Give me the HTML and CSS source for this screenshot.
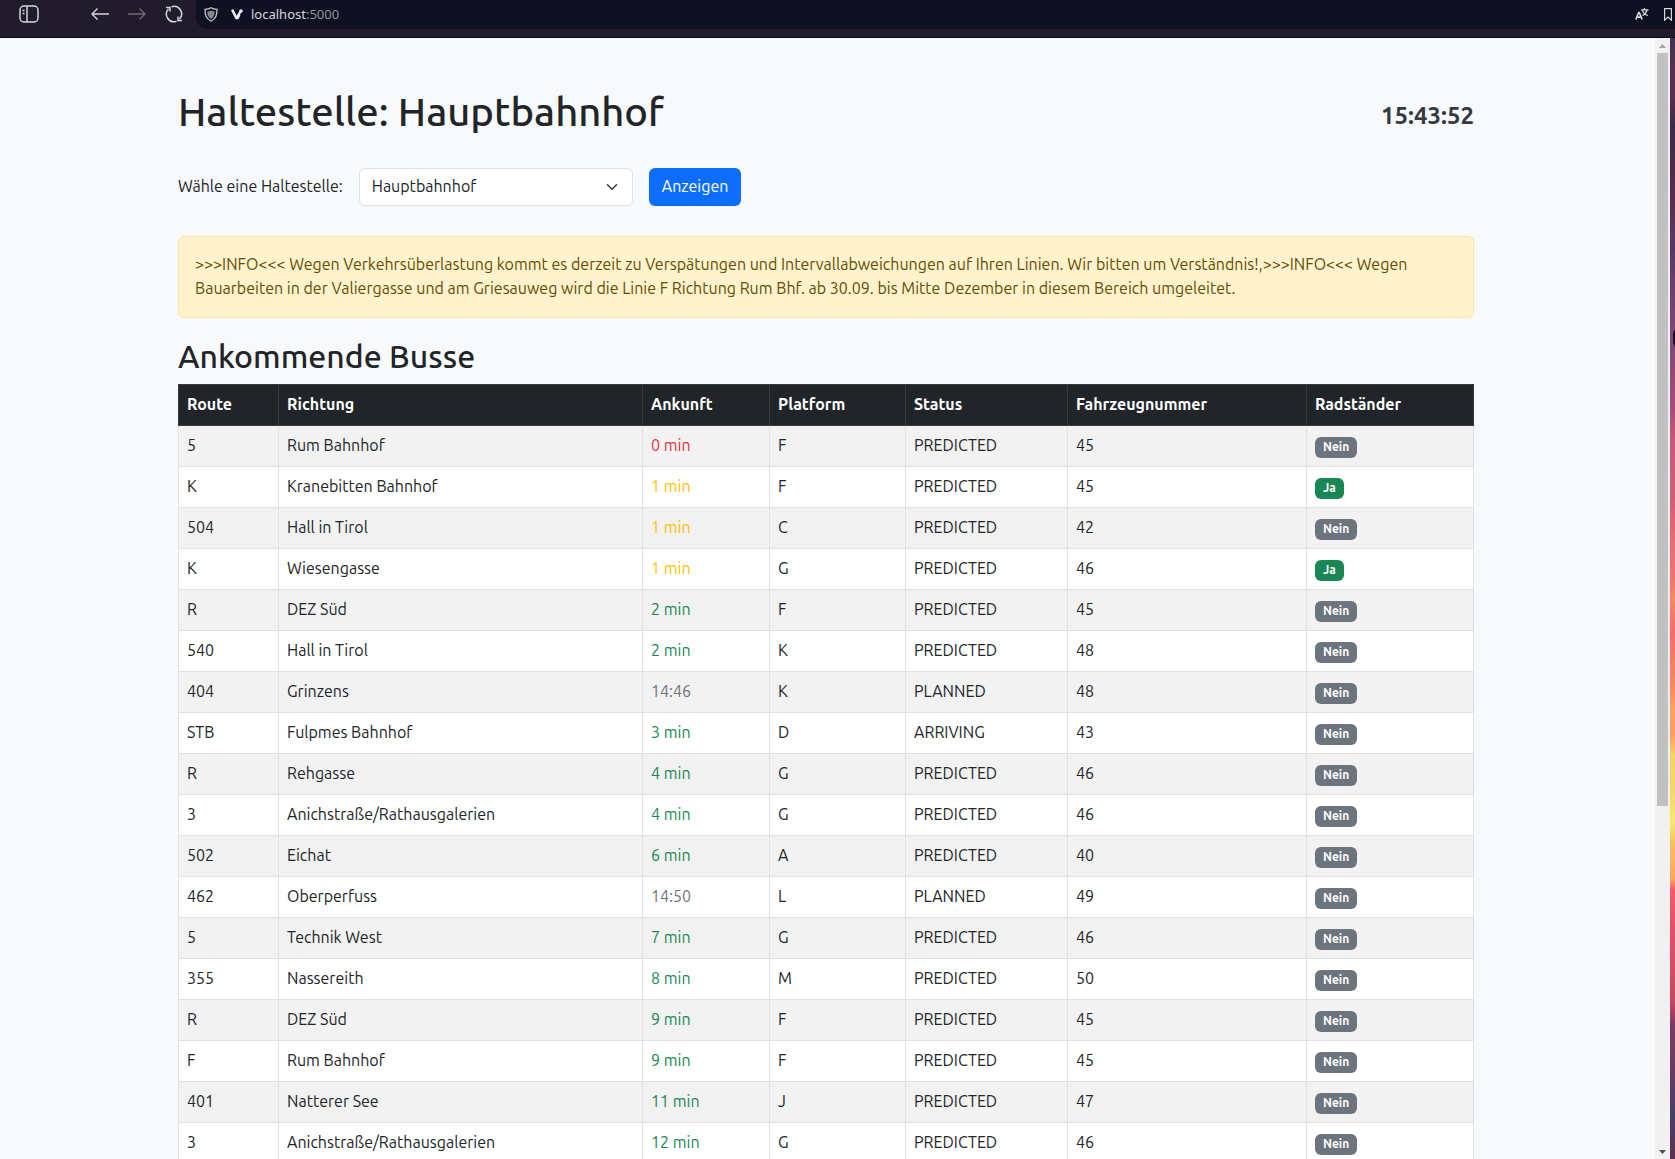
FILE: index.html
```html
<!DOCTYPE html>
<html lang="de">
<head>
<meta charset="utf-8">
<meta name="viewport" content="width=device-width, initial-scale=1">
<title>Haltestelle: Hauptbahnhof</title>
<link rel="stylesheet" href="styles.css">
</head>
<body>
<header class="browser-bar">
  <nav class="browser-nav" aria-label="Browser">
    <button class="icon-button panel-button" type="button" aria-label="Seitenleiste">
      <svg width="20" height="18" viewBox="0 0 20 18" fill="none" stroke="currentColor" stroke-width="1.5"><rect x="1" y="1" width="18" height="16" rx="4"/><path d="M8 1v16"/><path d="M3.5 5.5h2M3.5 8.5h2" stroke-width="1.3"/></svg>
    </button>
    <button class="icon-button" type="button" aria-label="Zurück">
      <svg width="18" height="12" viewBox="0 0 18 12" fill="none" stroke="currentColor" stroke-width="1.4"><path d="M1 6h17M6.5.5 1 6l5.500 5.500"/></svg>
    </button>
    <button class="icon-button" type="button" aria-label="Vorwärts" disabled>
      <svg width="18" height="12" viewBox="0 0 18 12" fill="none" stroke="currentColor" stroke-width="1.4"><path d="M17 6H0M11.500.5 17 6l-5.500 5.500"/></svg>
    </button>
    <button class="icon-button" type="button" aria-label="Neu laden">
      <svg width="18" height="18" viewBox="0 0 18 18" fill="none" stroke="currentColor" stroke-width="1.5"><path d="M6.500 1.800A7.500 7.500 0 0 1 14.500 14M11.500 16.200A7.500 7.500 0 0 1 3.500 4"/><path d="M1 2.500h4v4M17 15.500h-4v-4"/></svg>
    </button>
  </nav>
  <div class="address">
    <svg width="14" height="15" viewBox="0 0 14 15" fill="none" stroke="currentColor" stroke-width="1.300"><path d="M7 .8c2 1.200 4 1.500 6 1.500 0 5.500-.8 9.200-6 12-5.200-2.800-6-6.500-6-12 2 0 4-.3 6-1.500z"/><path d="M7 3.500c1.300.7 2.500 1 3.700 1.100-.1 3.500-.8 5.600-3.700 7.400-2.900-1.800-3.600-3.900-3.700-7.400C4.500 4.500 5.700 4.200 7 3.500z" fill="#85868f" stroke="none"/></svg>
    <svg class="site-icon" width="12" height="11" viewBox="0 0 12 11" fill="none" stroke="currentColor" stroke-linecap="round" stroke-linejoin="round" stroke-width="2.600"><path d="M1.600 1.600 5.400 9l1.200 0 1.400-2.800"/><path d="M5.400 9 9.600 2.300" stroke-width="2.200"/><circle cx="10" cy="1.900" r="1" stroke-width="1.500"/></svg>
    <a class="url" href="#">localhost<span class="port">:5000</span></a>
    <div class="address-tools">
      <button class="icon-button" type="button" aria-label="Übersetzen">
        <svg width="14" height="12" viewBox="0 0 14 12" fill="none" stroke="currentColor"><path d="M.8 11.500 3.700 4.500h.6l2.900 7M2 9.200h4" stroke-width="1.700"/><path d="M6 1.800h7.500M9.500 0v1.800M12 2c-.6 2.500-2 4.500-4.500 5.500M7.500 2.500c.8 2.300 2.500 4.200 5.500 5" stroke-width="1.200"/></svg>
      </button>
      <button class="icon-button" type="button" aria-label="Lesezeichen">
        <svg width="8" height="13" viewBox="0 0 8 13" fill="none" stroke="currentColor" stroke-width="1.200"><path d="M.6.6h6.800v11.600L4 9 .6 12.200z"/></svg>
      </button>
    </div>
  </div>
</header>
<div class="window">
  <main class="page">
    <div class="title-row">
      <h1>Haltestelle: Hauptbahnhof</h1>
      <time class="clock">15:43:52</time>
    </div>
    <form class="stop-form">
      <label for="stop">Wähle eine Haltestelle:</label>
      <div class="select-wrap">
        <select id="stop"><option>Hauptbahnhof</option></select>
        <svg class="chevron" width="12" height="12" viewBox="0 0 16 16" fill="none" stroke="#343a40" stroke-width="2" stroke-linecap="round" stroke-linejoin="round"><path d="m2 5 6 6 6-6"/></svg>
      </div>
      <button class="submit" type="submit">Anzeigen</button>
    </form>
    <div class="alert" role="alert">&gt;&gt;&gt;INFO&lt;&lt;&lt; Wegen Verkehrsüberlastung kommt es derzeit zu Verspätungen und Intervallabweichungen auf Ihren Linien. Wir bitten um Verständnis!,&gt;&gt;&gt;INFO&lt;&lt;&lt; Wegen Bauarbeiten in der Valiergasse und am Griesauweg wird die Linie F Richtung Rum Bhf. ab 30.09. bis Mitte Dezember in diesem Bereich umgeleitet.</div>
    <h2>Ankommende Busse</h2>
    <table class="departures">
      <colgroup><col class="c-route"><col class="c-direction"><col class="c-arrival"><col class="c-platform"><col class="c-status"><col class="c-vehicle"><col class="c-rack"></colgroup>
      <thead><tr><th>Route</th><th>Richtung</th><th>Ankunft</th><th>Platform</th><th>Status</th><th>Fahrzeugnummer</th><th>Radständer</th></tr></thead>
      <tbody>
        <tr><td>5</td><td>Rum Bahnhof</td><td class="now">0 min</td><td>F</td><td>PREDICTED</td><td>45</td><td><span class="badge">Nein</span></td></tr>
        <tr><td>K</td><td>Kranebitten Bahnhof</td><td class="soon">1 min</td><td>F</td><td>PREDICTED</td><td>45</td><td><span class="badge yes">Ja</span></td></tr>
        <tr><td>504</td><td>Hall in Tirol</td><td class="soon">1 min</td><td>C</td><td>PREDICTED</td><td>42</td><td><span class="badge">Nein</span></td></tr>
        <tr><td>K</td><td>Wiesengasse</td><td class="soon">1 min</td><td>G</td><td>PREDICTED</td><td>46</td><td><span class="badge yes">Ja</span></td></tr>
        <tr><td>R</td><td>DEZ Süd</td><td class="later">2 min</td><td>F</td><td>PREDICTED</td><td>45</td><td><span class="badge">Nein</span></td></tr>
        <tr><td>540</td><td>Hall in Tirol</td><td class="later">2 min</td><td>K</td><td>PREDICTED</td><td>48</td><td><span class="badge">Nein</span></td></tr>
        <tr><td>404</td><td>Grinzens</td><td class="planned">14:46</td><td>K</td><td>PLANNED</td><td>48</td><td><span class="badge">Nein</span></td></tr>
        <tr><td>STB</td><td>Fulpmes Bahnhof</td><td class="later">3 min</td><td>D</td><td>ARRIVING</td><td>43</td><td><span class="badge">Nein</span></td></tr>
        <tr><td>R</td><td>Rehgasse</td><td class="later">4 min</td><td>G</td><td>PREDICTED</td><td>46</td><td><span class="badge">Nein</span></td></tr>
        <tr><td>3</td><td>Anichstraße/Rathausgalerien</td><td class="later">4 min</td><td>G</td><td>PREDICTED</td><td>46</td><td><span class="badge">Nein</span></td></tr>
        <tr><td>502</td><td>Eichat</td><td class="later">6 min</td><td>A</td><td>PREDICTED</td><td>40</td><td><span class="badge">Nein</span></td></tr>
        <tr><td>462</td><td>Oberperfuss</td><td class="planned">14:50</td><td>L</td><td>PLANNED</td><td>49</td><td><span class="badge">Nein</span></td></tr>
        <tr><td>5</td><td>Technik West</td><td class="later">7 min</td><td>G</td><td>PREDICTED</td><td>46</td><td><span class="badge">Nein</span></td></tr>
        <tr><td>355</td><td>Nassereith</td><td class="later">8 min</td><td>M</td><td>PREDICTED</td><td>50</td><td><span class="badge">Nein</span></td></tr>
        <tr><td>R</td><td>DEZ Süd</td><td class="later">9 min</td><td>F</td><td>PREDICTED</td><td>45</td><td><span class="badge">Nein</span></td></tr>
        <tr><td>F</td><td>Rum Bahnhof</td><td class="later">9 min</td><td>F</td><td>PREDICTED</td><td>45</td><td><span class="badge">Nein</span></td></tr>
        <tr><td>401</td><td>Natterer See</td><td class="later">11 min</td><td>J</td><td>PREDICTED</td><td>47</td><td><span class="badge">Nein</span></td></tr>
        <tr><td>3</td><td>Anichstraße/Rathausgalerien</td><td class="later">12 min</td><td>G</td><td>PREDICTED</td><td>46</td><td><span class="badge">Nein</span></td></tr>
      </tbody>
    </table>
  </main>
  <div class="scrollbar" aria-hidden="true">
    <svg class="scroll-arrow" width="15" height="15" viewBox="0 0 15 15"><path d="M4 10h7L7.500 6z" fill="#a3a3a3"/></svg>
    <div class="track"><div class="thumb"></div></div>
    <svg class="scroll-arrow" width="15" height="15" viewBox="0 0 15 15"><path d="M4 6h7l-3.500 4z" fill="#505050"/></svg>
  </div>
  <div class="wallpaper" aria-hidden="true"><span class="wallpaper-dot"></span></div>
</div>
</body>
</html>
```
FILE: styles.css
```css
*, *::before, *::after { box-sizing: border-box; }

body {
  margin: 0;
  height: 100vh;
  overflow: hidden;
  display: flex;
  flex-direction: column;
  font-family: "Ubuntu", "Noto Sans", sans-serif;
  font-size: 16px;
  line-height: 24px;
  color: #212529;
  background: #f8f9fb;
}

button, select { font: inherit; }

/* Browser bar */
.browser-bar {
  flex: none;
  display: flex;
  align-items: flex-start;
  height: 38px;
  background: #211c2b;
  border-bottom: 1px solid #0b0912;
}

.browser-nav {
  display: flex;
  align-items: center;
  gap: 19px;
  height: 28px;
  padding: 0 13px 0 19px;
}

.icon-button {
  display: flex;
  padding: 0;
  border: 0;
  background: none;
  color: #d6d5d9;
}

.icon-button:disabled { color: #6d6975; }
.panel-button { margin-right: 33px; }

.address {
  flex: 1;
  display: flex;
  align-items: center;
  gap: 13px;
  height: 29px;
  padding: 0 3px 1px 8px;
  background: #0f1022;
  border-radius: 0 0 0 12px;
  color: #c5c6cc;
}

.site-icon { color: #eeeef0; }

.url {
  margin-left: -5px;
  font-family: "Noto Sans", sans-serif;
  font-size: 13px;
  color: #d9d9de;
  text-decoration: none;
}

.port { color: #9293a0; }

.address-tools {
  display: flex;
  align-items: center;
  gap: 15px;
  margin-left: auto;
}

/* Page */
.window {
  flex: 1;
  min-height: 0;
  display: flex;
}

.page {
  flex: 1;
  min-width: 0;
  padding: 48px 15px 0 12px;
  overflow: hidden;
}

.page > * {
  max-width: 1296px;
  margin-left: auto;
  margin-right: auto;
}

.title-row {
  display: flex;
  align-items: flex-end;
  justify-content: space-between;
  margin-bottom: 30px;
}

h1, h2 { font-weight: 500; }

h1 {
  margin: 0;
  font-size: 40px;
  line-height: 52px;
}

.clock {
  font-size: 24px;
  font-weight: 700;
  line-height: 44px;
  color: #343a40;
}

.stop-form {
  display: flex;
  align-items: center;
  gap: 16px;
  margin-bottom: 30px;
}

.stop-form label { padding-bottom: 2px; }

.select-wrap {
  position: relative;
  width: 274px;
}

select {
  display: block;
  width: 100%;
  height: 38px;
  padding: 0 36px 2px 12px;
  appearance: none;
  border: 1px solid #dee2e6;
  border-radius: 6px;
  background: #fff;
  color: #212529;
}

.chevron {
  position: absolute;
  top: 13px;
  right: 15px;
  pointer-events: none;
}

.submit {
  height: 38px;
  padding: 0 13px 2px;
  border: 0;
  border-radius: 6px;
  background: #0d6efd;
  color: #fff;
}

.alert {
  padding: 15px 16px 17px;
  border: 1px solid #ffe69c;
  border-radius: 6px;
  background: #fff3cd;
  color: #664d03;
}

h2 {
  margin-top: 18px;
  margin-bottom: 8px;
  font-size: 32px;
  line-height: 40px;
}

.departures {
  width: 100%;
  table-layout: fixed;
  border-collapse: collapse;
  background: #fff;
}

.c-route { width: 100px; }
.c-direction { width: 364px; }
.c-arrival { width: 127px; }
.c-platform { width: 136px; }
.c-status { width: 162px; }
.c-vehicle { width: 239px; }

.departures th,
.departures td {
  height: 41px;
  padding: 0 8px 2px;
  border: 1px solid #dee2e6;
  text-align: left;
}

.departures th {
  background: #212529;
  border-color: #373b3e;
  color: #fff;
  font-weight: 700;
}

.departures tbody tr:nth-child(odd) { background: #f2f2f2; }

.departures .now { color: #dc3545; }
.departures .soon { color: #ffc107; }
.departures .later { color: #198754; }
.departures .planned { color: #6c757d; }

.badge {
  display: block;
  width: fit-content;
  margin-top: 4px;
  padding: 0 8px 2px;
  border-radius: 6px;
  background: #6c757d;
  color: #fff;
  font-size: 12px;
  font-weight: 700;
  line-height: 19px;
}

.badge.yes { background: #198754; }

/* Scrollbar and desktop edge */
.scrollbar {
  flex: none;
  display: flex;
  flex-direction: column;
  width: 15px;
  background: #f1f1f1;
}

.scroll-arrow { flex: none; }

.track {
  flex: 1;
  padding: 0 2px;
}

.thumb {
  height: 69%;
  background: #c1c1c1;
}

.wallpaper {
  flex: none;
  position: relative;
  width: 5px;
  overflow: hidden;
  background: linear-gradient(
    #3f3050 0%, #5b3050 3%, #5c3050 5%, #3a2a4a 8%, #5a2c4c 14%,
    #583a68 19%, #70406f 23%, #804878 27%, #a24d7a 33%, #c65a7c 36%,
    #cc5f78 41%, #ec6a72 45%, #f77070 48%, #f98565 50%, #fb6a6a 53%,
    #f98863 58%, #f9a562 60%, #fb9a66 62%, #f4d36a 64%, #f6d66a 67%,
    #f6e96c 70%, #fbbd62 72%, #f9a860 75%, #f45a68 76%, #e9506a 79%,
    #da4c66 82%, #c8465f 86%, #7c3b63 88%, #6b3b62 92%, #48406a 96%,
    #5e2f50 100%
  );
}

.wallpaper-dot {
  position: absolute;
  top: 290px;
  left: 3px;
  width: 12px;
  height: 20px;
  border-radius: 6px;
  background: #15121f;
}
```
